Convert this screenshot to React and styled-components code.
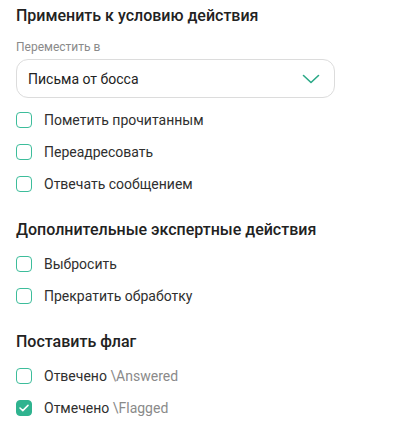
import React, { useState } from 'react'
import styled, { createGlobalStyle } from 'styled-components'

const GlobalStyle = createGlobalStyle`
  body {
    margin: 0;
    background: #fff;
    font-family: Roboto, "Noto Sans", Arial, sans-serif;
    color: #2b2b2b;
  }
`

const Panel = styled.div`
  padding: 4px 16px 0;
  display: flex;
  flex-direction: column;
`

const Section = styled.section`
  display: flex;
  flex-direction: column;
  & + & {
    margin-top: 18px;
  }
`

const Heading = styled.h3`
  margin: 0 0 6px;
  font-size: 16px;
  line-height: 24px;
  font-weight: 500;
  color: #222;
`

const FieldLabel = styled.div`
  margin-top: 5px;
  font-size: 12px;
  line-height: 16px;
  color: #8a8a8a;
`

const Select = styled.div`
  margin: 4px 0 6px;
  width: 319px;
  height: 39px;
  box-sizing: border-box;
  border: 1px solid #dcdcdc;
  border-radius: 12px;
  padding: 0 14px 0 11px;
  display: flex;
  align-items: center;
  justify-content: space-between;
  font-size: 14px;
  color: #222;
  cursor: pointer;
`

const Row = styled.label`
  height: 32px;
  display: flex;
  align-items: center;
  gap: 12px;
  font-size: 14px;
  color: #2f2f2f;
  cursor: pointer;
`

const Box = styled.span`
  width: 16px;
  height: 16px;
  box-sizing: border-box;
  border-radius: 4px;
  border: 1.5px solid ${p => (p.checked ? '#2fb38f' : '#3dbd9b')};
  background: ${p => (p.checked ? '#2fb38f' : '#fff')};
  display: flex;
  align-items: center;
  justify-content: center;
  flex-shrink: 0;
`

const Flag = styled.span`
  color: #8a8a8a;
`

const Chevron = () => (
  <svg width="18" height="10" viewBox="0 0 18 10" fill="none">
    <path d="M1.5 1.5L9 8.5L16.5 1.5" stroke="#2aa886" strokeWidth="1.6" strokeLinecap="round" strokeLinejoin="round" />
  </svg>
)

const Tick = () => (
  <svg width="10" height="8" viewBox="0 0 10 8" fill="none">
    <path d="M1 4L3.8 6.6L9 1.4" stroke="#fff" strokeWidth="1.5" strokeLinecap="round" strokeLinejoin="round" />
  </svg>
)

const Check = ({ checked, onToggle, children }) => (
  <Row onClick={onToggle}>
    <Box checked={checked}>{checked && <Tick />}</Box>
    <span>{children}</span>
  </Row>
)

const App = () => {
  const [state, setState] = useState({ flagged: true })
  const toggle = key => () => setState(s => ({ ...s, [key]: !s[key] }))

  return (
    <>
      <GlobalStyle />
      <Panel>
        <Section>
          <Heading>Применить к условию действия</Heading>
          <FieldLabel>Переместить в</FieldLabel>
          <Select>
            <span>Письма от босса</span>
            <Chevron />
          </Select>
          <Check checked={state.read} onToggle={toggle('read')}>Пометить прочитанным</Check>
          <Check checked={state.forward} onToggle={toggle('forward')}>Переадресовать</Check>
          <Check checked={state.reply} onToggle={toggle('reply')}>Отвечать сообщением</Check>
        </Section>
        <Section>
          <Heading>Дополнительные экспертные действия</Heading>
          <Check checked={state.discard} onToggle={toggle('discard')}>Выбросить</Check>
          <Check checked={state.stop} onToggle={toggle('stop')}>Прекратить обработку</Check>
        </Section>
        <Section>
          <Heading>Поставить флаг</Heading>
          <Check checked={state.answered} onToggle={toggle('answered')}>Отвечено <Flag>\Answered</Flag></Check>
          <Check checked={state.flagged} onToggle={toggle('flagged')}>Отмечено <Flag>\Flagged</Flag></Check>
        </Section>
      </Panel>
    </>
  )
}

export default App
